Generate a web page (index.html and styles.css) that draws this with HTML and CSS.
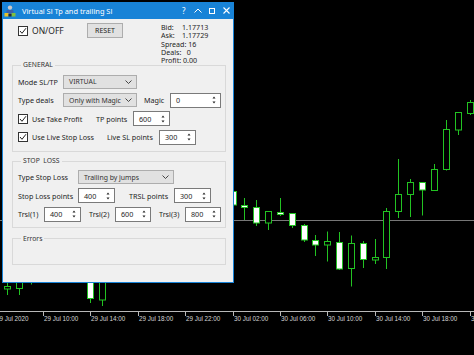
FILE: index.html
```html
<!DOCTYPE html>
<html lang="en">
<head>
    <meta charset="UTF-8">
    <title>Virtual Sl Tp and trailing Sl</title>
    <link rel="stylesheet" href="styles.css">
</head>
<body>
    <svg class="chart" width="474" height="355" viewBox="0 0 474 355">
        <line class="level" x1="0" y1="220.5" x2="474" y2="220.5"/>
        <line class="axis" x1="0" y1="311.5" x2="474" y2="311.5"/>

        <g class="ticks">
            <line x1="43.5" y1="311" x2="43.5" y2="316"/>
            <line x1="90.5" y1="311" x2="90.5" y2="316"/>
            <line x1="138.5" y1="311" x2="138.5" y2="316"/>
            <line x1="185.5" y1="311" x2="185.5" y2="316"/>
            <line x1="233.5" y1="311" x2="233.5" y2="316"/>
            <line x1="280.5" y1="311" x2="280.5" y2="316"/>
            <line x1="327.5" y1="311" x2="327.5" y2="316"/>
            <line x1="375.5" y1="311" x2="375.5" y2="316"/>
            <line x1="422.5" y1="311" x2="422.5" y2="316"/>
            <line x1="470.5" y1="311" x2="470.5" y2="316"/>
        </g>
        <g class="labels">
            <text x="-4" y="320.5">29 Jul 2020</text>
            <text x="44" y="320.5">29 Jul 10:00</text>
            <text x="91" y="320.5">29 Jul 14:00</text>
            <text x="139" y="320.5">29 Jul 18:00</text>
            <text x="186" y="320.5">29 Jul 22:00</text>
            <text x="234" y="320.5">30 Jul 02:00</text>
            <text x="281" y="320.5">30 Jul 06:00</text>
            <text x="328" y="320.5">30 Jul 10:00</text>
            <text x="376" y="320.5">30 Jul 14:00</text>
            <text x="423" y="320.5">30 Jul 18:00</text>
            <text x="471" y="320.5">30 Jul 22:00</text>
        </g>

        <g class="candles">
            <!-- left of the panel, mostly hidden -->
            <line x1="7.5" y1="270" x2="7.5" y2="295"/><rect class="dn" x="4.5" y="286.5" width="6" height="2.5"/>
            <line x1="19.5" y1="270" x2="19.5" y2="295"/><rect class="dn" x="16.5" y="270.5" width="6" height="18"/>
            <line x1="31.5" y1="260" x2="31.5" y2="284.5"/><rect class="dn" x="28.5" y="260.5" width="6" height="14"/>
            <line x1="90.5" y1="270" x2="90.5" y2="303"/><rect class="up" x="87.5" y="270.5" width="6" height="28"/>
            <line x1="102.5" y1="270" x2="102.5" y2="306"/><rect class="dn" x="99.5" y="270.5" width="6" height="29.5"/>

            <!-- right of the panel -->
            <line x1="233.5" y1="188" x2="233.5" y2="208"/><rect class="up" x="230.5" y="191.5" width="6" height="13.5"/>
            <line x1="244.5" y1="198" x2="244.5" y2="220"/><rect class="up" x="241.5" y="205.5" width="6" height="2"/>
            <line x1="256.5" y1="200" x2="256.5" y2="226"/><rect class="up" x="253.5" y="207.5" width="6" height="15.5"/>
            <line x1="268.5" y1="211" x2="268.5" y2="230"/><rect class="dn" x="265.5" y="211.5" width="6" height="11.5"/>
            <line x1="280.5" y1="198" x2="280.5" y2="216"/><rect class="up" x="277.5" y="212.5" width="6" height="2"/>
            <line x1="292.5" y1="213" x2="292.5" y2="228"/><rect class="up" x="289.5" y="213.5" width="6" height="12"/>
            <line x1="304.5" y1="224" x2="304.5" y2="242"/><rect class="up" x="301.5" y="225.5" width="6" height="14.5"/>
            <line x1="315.5" y1="235" x2="315.5" y2="256"/><rect class="up" x="312.5" y="240.5" width="6" height="4.5"/>
            <line x1="327.5" y1="231.5" x2="327.5" y2="261.5"/><rect class="dn" x="324.5" y="241.5" width="6" height="3.5"/>
            <line x1="339.5" y1="232" x2="339.5" y2="270"/><rect class="up" x="336.5" y="242.5" width="6" height="26.5"/>
            <line x1="351.5" y1="235.5" x2="351.5" y2="286.5"/><rect class="dn" x="348.5" y="243.5" width="6" height="25"/>
            <line x1="363.5" y1="241" x2="363.5" y2="268"/><rect class="up" x="360.5" y="243.5" width="6" height="16"/>
            <line x1="375.5" y1="239" x2="375.5" y2="264"/><rect class="dn" x="372.5" y="257.5" width="6" height="2.5"/>
            <line x1="386.5" y1="208" x2="386.5" y2="269"/><rect class="dn" x="383.5" y="211.5" width="6" height="46"/>
            <line x1="398.5" y1="159" x2="398.5" y2="218"/><rect class="dn" x="395.5" y="194.5" width="6" height="17"/>
            <line x1="410.5" y1="179" x2="410.5" y2="217"/><rect class="dn" x="407.5" y="182.5" width="6" height="12"/>
            <line x1="422.5" y1="182" x2="422.5" y2="215.5"/><rect class="up" x="419.5" y="182.5" width="6" height="7.5"/>
            <line x1="434.5" y1="164" x2="434.5" y2="190.5"/><rect class="dn" x="431.5" y="169.5" width="6" height="21"/>
            <line x1="446.5" y1="120" x2="446.5" y2="170.5"/><rect class="dn" x="443.5" y="129.5" width="6" height="40"/>
            <line x1="458.5" y1="112" x2="458.5" y2="135"/><rect class="dn" x="455.5" y="112.5" width="6" height="17.5"/>
            <line x1="470.5" y1="100" x2="470.5" y2="115"/><rect class="dn" x="467.5" y="102.5" width="6" height="11"/>
        </g>
    </svg>

    <div class="dialog">
        <div class="titlebar">
            <svg class="app-icon" width="12" height="12" viewBox="0 0 12 12">
                <circle cx="6" cy="2.6" r="2.2" fill="#c9c9c9"/>
                <rect x="2.5" y="5" width="7" height="4" rx="1" fill="#3d5fa8"/>
                <rect x="0.5" y="8" width="4" height="3.5" fill="#e6c229"/>
                <rect x="7.5" y="8" width="4" height="3.5" fill="#7fbf3f"/>
                <rect x="4.5" y="9" width="3" height="2.5" fill="#2b2b2b"/>
            </svg>
            <span class="title">Virtual Sl Tp and trailing Sl</span>
            <span class="tb-btn tb-help">?</span>
            <span class="tb-btn">
                <svg width="8" height="5" viewBox="0 0 8 5"><polyline points="0.5,4.5 4,1 7.5,4.5" fill="none" stroke="#fff" stroke-width="1"/></svg>
            </span>
            <span class="tb-btn">
                <svg width="6" height="6" viewBox="0 0 6 6"><rect x="0.5" y="0.5" width="5" height="5" fill="none" stroke="#fff" stroke-width="1"/></svg>
            </span>
            <span class="tb-btn">
                <svg width="7" height="7" viewBox="0 0 7 7"><path d="M0.5 0.5 L6.5 6.5 M6.5 0.5 L0.5 6.5" stroke="#fff" stroke-width="1.1"/></svg>
            </span>
        </div>

        <div class="content">
            <div class="top-row">
                <label class="check onoff"><span class="box"><svg width="8" height="8" viewBox="0 0 8 8"><polyline points="1,4 3,6.3 7,1.2" fill="none" stroke="#222" stroke-width="1"/></svg></span>ON/OFF</label>
                <button class="reset">RESET</button>
                <div class="info">
                    <div><span class="key">Bid:</span>1.17713</div>
                    <div><span class="key">Ask:</span>1.17729</div>
                    <div>Spread: 16</div>
                    <div>Deals:&nbsp;&nbsp;&nbsp;0</div>
                    <div>Profit: 0.00</div>
                </div>
            </div>

            <fieldset class="group general">
                <legend>GENERAL</legend>
                <div class="rows">
                    <div class="row">
                        <span class="lbl w45">Mode SL/TP</span>
                        <span class="select w74">VIRTUAL<svg class="chev" width="7" height="4" viewBox="0 0 7 4"><polyline points="0.5,0.5 3.5,3.5 6.5,0.5" fill="none" stroke="#333" stroke-width="0.9"/></svg></span>
                    </div>
                    <div class="row">
                        <span class="lbl w45">Type deals</span>
                        <span class="select w74">Only with Magic<svg class="chev" width="7" height="4" viewBox="0 0 7 4"><polyline points="0.5,0.5 3.5,3.5 6.5,0.5" fill="none" stroke="#333" stroke-width="0.9"/></svg></span>
                        <span class="lbl ml7 w26">Magic</span>
                        <span class="spin w51">0<svg class="arrows" width="4" height="8" viewBox="0 0 4 8"><path d="M2 0.5 L3.5 2.5 L0.5 2.5 Z M2 7.5 L3.5 5.5 L0.5 5.5 Z" fill="#222"/></svg></span>
                    </div>
                    <div class="row">
                        <label class="check w78"><span class="box"><svg width="8" height="8" viewBox="0 0 8 8"><polyline points="1,4 3,6.3 7,1.2" fill="none" stroke="#222" stroke-width="1"/></svg></span>Use Take Profit</label>
                        <span class="lbl w37">TP points</span>
                        <span class="spin w37">600<svg class="arrows" width="4" height="8" viewBox="0 0 4 8"><path d="M2 0.5 L3.5 2.5 L0.5 2.5 Z M2 7.5 L3.5 5.5 L0.5 5.5 Z" fill="#222"/></svg></span>
                    </div>
                    <div class="row">
                        <label class="check w89"><span class="box"><svg width="8" height="8" viewBox="0 0 8 8"><polyline points="1,4 3,6.3 7,1.2" fill="none" stroke="#222" stroke-width="1"/></svg></span>Use Live Stop Loss</label>
                        <span class="lbl w52">Live SL points</span>
                        <span class="spin w37">300<svg class="arrows" width="4" height="8" viewBox="0 0 4 8"><path d="M2 0.5 L3.5 2.5 L0.5 2.5 Z M2 7.5 L3.5 5.5 L0.5 5.5 Z" fill="#222"/></svg></span>
                    </div>
                </div>
            </fieldset>

            <fieldset class="group stoploss">
                <legend>STOP&nbsp;&nbsp;LOSS</legend>
                <div class="rows">
                    <div class="row">
                        <span class="lbl w60">Type Stop Loss</span>
                        <span class="select w96">Trailing by jumps<svg class="chev" width="7" height="4" viewBox="0 0 7 4"><polyline points="0.5,0.5 3.5,3.5 6.5,0.5" fill="none" stroke="#333" stroke-width="0.9"/></svg></span>
                    </div>
                    <div class="row">
                        <span class="lbl w60">Stop Loss points</span>
                        <span class="spin w37">400<svg class="arrows" width="4" height="8" viewBox="0 0 4 8"><path d="M2 0.5 L3.5 2.5 L0.5 2.5 Z M2 7.5 L3.5 5.5 L0.5 5.5 Z" fill="#222"/></svg></span>
                        <span class="lbl ml14 w45">TRSL points</span>
                        <span class="spin w37">300<svg class="arrows" width="4" height="8" viewBox="0 0 4 8"><path d="M2 0.5 L3.5 2.5 L0.5 2.5 Z M2 7.5 L3.5 5.5 L0.5 5.5 Z" fill="#222"/></svg></span>
                    </div>
                    <div class="row">
                        <span class="lbl w26">Trsl(1)</span>
                        <span class="spin w37">400<svg class="arrows" width="4" height="8" viewBox="0 0 4 8"><path d="M2 0.5 L3.5 2.5 L0.5 2.5 Z M2 7.5 L3.5 5.5 L0.5 5.5 Z" fill="#222"/></svg></span>
                        <span class="lbl ml8 w26">Trsl(2)</span>
                        <span class="spin w36">600<svg class="arrows" width="4" height="8" viewBox="0 0 4 8"><path d="M2 0.5 L3.5 2.5 L0.5 2.5 Z M2 7.5 L3.5 5.5 L0.5 5.5 Z" fill="#222"/></svg></span>
                        <span class="lbl ml8 w26">Trsl(3)</span>
                        <span class="spin w36">800<svg class="arrows" width="4" height="8" viewBox="0 0 4 8"><path d="M2 0.5 L3.5 2.5 L0.5 2.5 Z M2 7.5 L3.5 5.5 L0.5 5.5 Z" fill="#222"/></svg></span>
                    </div>
                </div>
            </fieldset>

            <fieldset class="group errors">
                <legend>Errors</legend>
            </fieldset>
        </div>
    </div>
</body>
</html>
```

FILE: styles.css
```css
* {
    box-sizing: border-box;
}
body {
    margin: 0;
    width: 474px;
    height: 355px;
    overflow: hidden;
    position: relative;
    background: #000;
    font-family: "Noto Sans", sans-serif;
    color: #1e1e1e;
}

/* chart */
.chart {
    display: block;
}
.level {
    stroke: #777;
    stroke-width: 1;
}
.axis {
    stroke: #b8b8b8;
    stroke-width: 1;
}
.ticks line {
    stroke: #b8b8b8;
    stroke-width: 1;
}
.labels text {
    font-family: "Liberation Sans", sans-serif;
    font-size: 6.3px;
    fill: #d4d4d4;
}
.candles line {
    stroke: #22c322;
    stroke-width: 1;
}
.candles rect {
    stroke: #22c322;
    stroke-width: 1;
}
.candles .up {
    fill: #fff;
}
.candles .dn {
    fill: #000;
}

/* dialog window */
.dialog {
    position: absolute;
    left: 2px;
    top: 2px;
    width: 232px;
    height: 281px;
    background: #f0f0f0;
    border: 1px solid #1883d7;
    border-top: 0;
}
.titlebar {
    height: 17px;
    margin: 0 -1px;
    padding-left: 2px;
    background: #1883d7;
    color: #fff;
    display: flex;
    align-items: center;
    font-size: 7.4px;
}
.app-icon {
    flex: none;
}
.title {
    margin-left: 6px;
    flex: 1;
    white-space: nowrap;
}
.tb-btn {
    width: 14.4px;
    display: flex;
    justify-content: center;
    align-items: center;
}
.tb-help {
    font-size: 8px;
}

.content {
    padding: 0 7px 0 9px;
}
.top-row {
    height: 39px;
    display: flex;
    align-items: flex-start;
}
.check {
    display: flex;
    align-items: center;
    gap: 4px;
    white-space: nowrap;
    font-size: 7.2px;
}
.box {
    width: 10px;
    height: 10px;
    flex: none;
    background: #fff;
    border: 1px solid #333;
    display: flex;
    align-items: center;
    justify-content: center;
}
.onoff {
    width: 69px;
    margin: 6px 0 0 6px;
    font-size: 8.5px;
}
.reset {
    width: 36px;
    height: 15px;
    margin-top: 4px;
    padding: 0;
    background: #e1e1e1;
    border: 1px solid #adadad;
    font-family: "Noto Sans", sans-serif;
    font-size: 7px;
    color: #1e1e1e;
}
.info {
    margin: 4px 0 0 38px;
    font-size: 7.1px;
    line-height: 8.3px;
    white-space: nowrap;
}
.key {
    display: inline-block;
    width: 21px;
}

/* group boxes */
.group {
    margin: 0;
    padding: 0 5px;
    border: 1px solid #d9d9d9;
    min-width: 0;
}
.group legend {
    margin-left: 3px;
    padding: 0 2px;
    font-size: 6.8px;
    line-height: 10px;
    color: #333;
}
.general {
    margin-top: 2px;
}
.general .rows {
    padding: 4px 0 6.5px;
}
.stoploss {
    margin-top: 4px;
}
.stoploss .rows {
    padding: 3.5px 0 5px;
}
.errors {
    margin-top: 6px;
    height: 31px;
}
.rows {
    display: flex;
    flex-direction: column;
    gap: 3.5px;
}
.row {
    height: 15px;
    display: flex;
    align-items: center;
}
.lbl {
    flex: none;
    white-space: nowrap;
    font-size: 7.2px;
}
.select {
    height: 14px;
    flex: none;
    padding: 0 4px 0 5px;
    background: #e1e1e1;
    border: 1px solid #adadad;
    display: flex;
    align-items: center;
    justify-content: space-between;
    gap: 2px;
    font-size: 6.9px;
    color: #333;
    white-space: nowrap;
    overflow: hidden;
}
.chev {
    flex: none;
}
.spin {
    height: 15px;
    flex: none;
    padding: 0 4px 0 5px;
    background: #fff;
    border: 1px solid #7a7a7a;
    display: flex;
    align-items: center;
    justify-content: space-between;
    font-size: 7.2px;
}

.w26 { width: 26px; }
.w36 { width: 36px; }
.w37 { width: 37px; }
.w45 { width: 45px; }
.w51 { width: 51px; }
.w52 { width: 52px; }
.w60 { width: 60px; }
.w74 { width: 74px; }
.w78 { width: 78px; }
.w89 { width: 89px; }
.w96 { width: 96px; }
.ml7 { margin-left: 7px; }
.ml8 { margin-left: 8px; }
.ml14 { margin-left: 14px; }
```
